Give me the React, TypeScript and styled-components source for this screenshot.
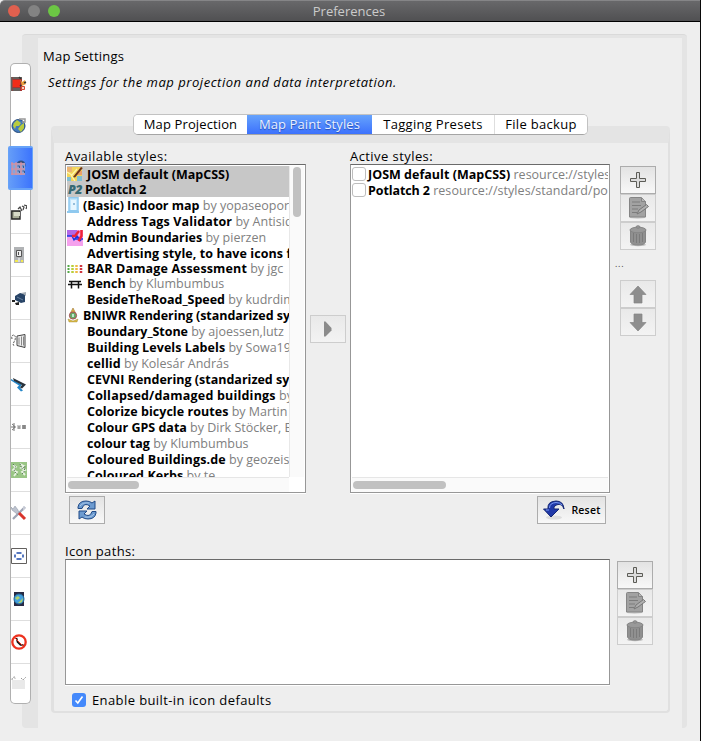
import React from "react";
import styled, { createGlobalStyle } from "styled-components";

const Global = createGlobalStyle`
  *{box-sizing:border-box}
  body{margin:0;background:#eee;font-family:"Open Sans","Noto Sans",sans-serif;font-size:13px;color:#000;overflow:hidden}
`;

/* window frame */
const Window = styled.div`
  width:701px;height:741px;display:flex;flex-direction:column;background:#eee;border-right:1px solid #0a0a0a;
`;
const TitleBar = styled.header`
  flex:none;height:22px;display:flex;align-items:center;padding-left:8px;gap:8px;
  background:linear-gradient(#68686a,#505052);border-top:1px solid #858587;border-bottom:1px solid #000;border-top-left-radius:5px;
`;
const Light = styled.i<{ $c: string }>`width:12px;height:12px;border-radius:50%;background:${p => p.$c};`;
const TitleText = styled.div`flex:1;text-align:center;padding-right:70px;color:#cbcbcb;`;
const Body = styled.div`flex:1;display:flex;align-items:flex-start;padding:12px 0 0 8px;`;

/* category strip */
const Strip = styled.nav`
  flex:none;width:25px;margin-top:29px;padding:0 2px;z-index:1;
`;
const StripTab = styled.div<{ $active?: boolean; $line?: boolean; $h: number }>`
  height:${p => p.$h}px;display:flex;align-items:center;
  margin:0 ${p => (p.$active ? "-2px" : "0")};padding-left:${p => (p.$active ? 2 : 0)}px;
  background:${p => (p.$active ? "linear-gradient(90deg,#659df8,#3c74fd)" : "#fff")};
  border:solid ${p => (p.$active ? "#67a3f8" : "#b0b0b0")};
  border-width:${p => (p.$active ? "2px 1px 2px 1px" : "0 1px")};
  border-radius:${p => (p.$active ? "2px" : "0")};
  box-shadow:${p => (p.$line ? "inset 0 1px #dedede" : "none")};
  &:first-child{border-radius:5px 5px 0 0;border-top-width:1px}
  &:last-child{border-radius:0 0 5px 5px;border-bottom-width:1px;box-shadow:inset 0 1px #dedede}
  svg{flex:none;display:block}
`;
const Frame = styled.main`
  flex:none;width:665px;height:694px;margin-left:-11px;padding:3px 5px 0 16px;
  background:#e4e4e4;border-top:1px solid #dadada;border-radius:4px;
`;
const Page = styled.section`
  height:690px;background:#eee;padding-left:5px;display:flex;flex-direction:column;align-items:flex-start;
`;
const Text = styled.span<{ $ls?: number; $bold?: boolean; $grey?: boolean }>`
  white-space:pre;letter-spacing:${p => p.$ls || 0}px;
  font-weight:${p => (p.$bold ? 700 : 400)};color:${p => (p.$grey ? "#808080" : "inherit")};
`;
const Heading = styled.h1`margin:9px 0 0;font-size:13px;font-weight:400;line-height:19px;`;
const Description = styled.p`margin:7px 0 0 5px;font-style:italic;line-height:19px;`;

/* inner tabs */
const TabRow = styled.div`
  height:21px;margin:22px 0 0 90px;display:flex;z-index:1;border-radius:5px;overflow:hidden;
  border:1px solid #c2c2c2;border-bottom-color:#a5a5a5;background:#fff;width:455px;
`;
const Tab = styled.div<{ $w: number; $active?: boolean; $line?: boolean }>`
  width:${p => p.$w}px;text-align:center;line-height:19px;white-space:nowrap;
  color:${p => (p.$active ? "#e9f1ff" : "#000")};
  background:${p => (p.$active ? "linear-gradient(#68a5fc,#3a6ffd)" : "#fff")};
  text-shadow:${p => (p.$active ? "0 1px 1px #254bb0" : "none")};
  border-left:${p => (p.$line ? "1px solid #dedede" : "0")};
  margin:${p => (p.$active ? "-1px 0" : "0")};padding-top:${p => (p.$active ? 1 : 0)}px;
`;
const TabPage = styled.div`
  width:619px;height:587px;margin:-9px 0 0 8px;border:1px solid #e0e0e0;border-width:1px 2px 2px 3px;border-radius:4px;
  border-top:17px solid #e4e4e4;padding:5px 0 0 11px;
`;
const Row = styled.div<{ $mt?: number }>`display:flex;align-items:flex-start;margin-top:${p => p.$mt || 0}px;`;
const Column = styled.div<{ $w: number; $ml?: number }>`
  flex:none;width:${p => p.$w}px;margin-left:${p => p.$ml || 0}px;display:flex;flex-direction:column;
`;
const Label = styled.div`height:16px;line-height:17px;white-space:nowrap;`;

/* lists */
const ListBox = styled.div<{ $h: number }>`
  height:${p => p.$h}px;background:#fff;border:1px solid #979797;border-top-color:#6a6a6a;box-shadow:0 1px #fff;
  display:grid;grid-template-columns:1fr auto;grid-template-rows:1fr auto;overflow:hidden;padding:1px;font-size:12.5px;
`;
const Items = styled.div`min-width:0;min-height:0;overflow:hidden;height:311px;`;
const Item = styled.div<{ $h: number; $sel?: boolean; $drop?: boolean }>`
  height:${p => p.$h}px;line-height:${p => (p.$drop ? p.$h + 1 : p.$h - 1)}px;display:flex;white-space:pre;overflow:hidden;
  background:${p => (p.$sel ? "#c7c7c7" : "#fff")};
`;
const Glyph = styled.span<{ $w: number }>`
  flex:none;width:${p => p.$w}px;
  svg{display:block;width:100%;height:100%}
`;
const P2 = styled.b`font-weight:800;font-style:italic;color:#376a74;padding-left:1px;letter-spacing:-.5px;`;
const VTrack = styled.div`width:15px;background:#fafafa;border-left:1px solid #e8e8e8;padding:1px 0 0 3px;`;
const VThumb = styled.div`width:8px;height:50px;border-radius:4px;background:#c1c1c1;`;
const HTrack = styled.div`height:15px;background:#fafafa;border-top:1px solid #e6e6e6;padding:3px 0 0 1px;`;
const HThumb = styled.div<{ $w: number }>`width:${p => p.$w}px;height:8px;border-radius:4px;background:#c1c1c1;`;
const Corner = styled.div`background:#fff;`;

/* controls */
const Button = styled.button<{ $off?: boolean; $w?: number; $mt?: number; $ml?: number }>`
  flex:none;width:${p => p.$w || 36}px;height:28px;margin:${p => p.$mt || 0}px 0 0 ${p => p.$ml || 0}px;padding:0;
  display:flex;align-items:center;justify-content:center;gap:5px;
  border:1px solid ${p => (p.$off ? "#cdcdcd" : "#acacac")};
  background:linear-gradient(${p => (p.$off ? "#e9e9e9,#f3f3f3" : "#e3e3e3,#f8f8f8")});
  font:600 10.5px/24px "Open Sans",sans-serif;color:#000;letter-spacing:.2px;
`;
const Dots = styled.div`height:30px;margin-left:-5px;line-height:28px;font-size:9px;letter-spacing:.7px;color:#444;`;
const Check = styled.i<{ $on?: boolean }>`
  flex:none;width:14px;height:14px;border-radius:3px;display:flex;align-items:center;justify-content:center;
  background:${p => (p.$on ? "#4489fb" : "#fff")};border:${p => (p.$on ? "0" : "1px solid #bdbdbd")};
  ${Item} &{margin:1px 2px 0 0}
`;
const CheckRow = styled.label`display:flex;align-items:center;gap:6px;margin:7px 0 0 7px;height:16px;`;

const S = ({ children, w = 16, h = 16 }: { children: React.ReactNode; w?: number; h?: number }) => (
  <svg width={w} height={h} viewBox={`0 0 ${w} ${h}`}>{children}</svg>
);

const Plus = () => <S w={18} h={18}><path d="M7.500 1.500h3v6h6v3h-6v6h-3v-6h-6v-3h6z" fill="#dcdcdc" stroke="#5c5c56" /></S>;
const Edit = () => <S w={22} h={24}><ellipse cx="10.500" cy="21.500" rx="8" ry="1.200" fill="#ccc" /><path d="M2.500 2.500q0-1 1-1h11l4 4v15.500h-16z" fill="#a2a2a2" stroke="#858585" /><path d="M5 6h8M5 9.500h9M5 13h6M5 16.500h5" stroke="#7c7c7c" /><path d="M14.500 2v3.500h4" fill="#b8b8b8" stroke="#858585" /><path d="m10 18 2-4 7.500-5.500 2 2-7.500 5.500z" fill="#b0b0b0" stroke="#777" /></S>;
const Trash = () => <S w={20} h={24}><ellipse cx="10" cy="20.800" rx="8" ry="1.500" fill="#bbb" /><path d="M2.500 6h15v12q-1 3-7.500 3t-7.500-3z" fill="#909090" stroke="#858585" /><path d="M5.500 9v9M8.500 10v9M11.500 10v9M14.500 9v9" stroke="#7b7b7b" /><ellipse cx="10" cy="6" rx="8" ry="2.800" fill="#999" stroke="#858585" /><ellipse cx="10" cy="3" rx="2" ry="1.200" fill="#999" stroke="#858585" /></S>;
const Arrow = ({ down }: { down?: boolean }) => <S w={18} h={20}><path transform={down ? "rotate(180 9 10.500)" : undefined} d="M9 2 17 10.500h-4V19H5v-8.500H1z" fill="#8e8e8e" stroke="#858585" strokeWidth=".7" /></S>;
const Play = () => <S><path d="M4 0.500v15h1.500l6-6V7l-6-6.500z" fill="#8b8b8b" /></S>;
const Refresh = () => <S w={22} h={22}><path d="M2 9.500V8q1-6 8-6 4 0 6 2l3-2v8h-8l3-3q-6-4-8 2.500z" fill="#6d9bd0" stroke="#204a87" /><path d="M20 12.500V14q-1 6-8 6-4 0-6-2l-3 2v-8h8l-3 3q6 4 8-2.500z" fill="#6d9bd0" stroke="#204a87" /><path d="M4 7q3-4 9-3M18 15q-3 4-9 3" stroke="#a9c7e8" fill="none" /></S>;
const Undo = () => <S w={24} h={22}><ellipse cx="12" cy="18.500" rx="8" ry="2" fill="#ddd" /><path d="M6 10q-1-7.500 8-8 7.500 0 8 8-2-5.500-6-4.500-4.500 1-4 4.500h5l-8 8-7.500-8z" fill="#2038a8" stroke="#152773" /><path d="M7.500 9q0-5 6.500-5.500 4 0 6 2.500M4 11h3" stroke="#7d9df4" fill="none" /></S>;

/* category icons */
const stripIcons = [
  <><path d="M0 1h11v14H0z" fill="#a53432" /><path d="M1 4h8v7H1z" fill="#f22d18" /><path d="M0 1h1.500v14H0M2 12h7v3H2zM2 1h9v2H2" fill="#65605c" /><path d="m9 3 2 3 3-2 1 4-4 2z" fill="#e9a13b" /><path d="m8 1 2 2m3 4 2-1m-6 3 2 2" stroke="#353535" strokeWidth="1.500" /><path d="M10.500 10.500h3v3h-3z" fill="#f7d4c5" stroke="#d54b31" /></>,
  <><circle cx="7.500" cy="9" r="6.500" fill="#437abc" stroke="#254b7b" /><path d="M3 6 6 3l4 3-2 3H5L4 12 2 9zm7 2 3-2v5l-3 4-3-3z" fill="#b9cc3e" /><path d="M8 2h6v3h-3" fill="none" stroke="#999" strokeWidth="1.500" /></>,
  <><circle cx="10" cy="5" r="4.500" fill="#34517e" /><path d="M1 3h13v12H1z" fill="#87a4da" /><path d="M1 2v13M5 2v13M10 2v13M0 4h14M0 9h14M0 14h14" stroke="#e28b94" strokeWidth="1.100" /><path d="M6.500 6h2v2m3-2h1v2m-6 3h2v2m3-2h2v2" stroke="#395b91" fill="none" /></>,
  <><path d="M.8 7v8H9V7z" fill="#aaae98" stroke="#222" strokeWidth="1.400" /><path d="M3 8h6v4H3" fill="#d7dac7" /><path d="m7 5 2-2 2 4m0-5 2 1-1 3m1-5 3 1-1 3" stroke="#444" fill="none" strokeWidth="1.200" /></>,
  <><path d="M3 0h10v16H3z" fill="#b1b3b5" /><path d="M5.500 3.500h5v6h-5z" fill="#eee" stroke="#555" /><path d="M7.500 5v3" stroke="#555" /><path d="M4 13h3v2H4m6-2h2v2h-2" fill="#f2e951" /><path d="M8 11v4" stroke="#fff" /></>,
  <><path d="m4 6 5-3 5 1v8l-4 1-6-3z" fill="#284467" /><path d="m10 3 5-1v4l-3-2" fill="#a5adb5" /><path d="M1 10h3v2H1m3 1 4-1v3H5z" fill="#222" /><path d="m6 7 6 3" stroke="#6680a0" /></>,
  <><path d="m6 3 8-1.500v13l-8-2z" fill="#eee" stroke="#444" /><path d="M8 4.500v7m2.500-8v9m2-9v9" fill="none" stroke="#888" /><path d="M1 6Q0 2 3 2q2 1 1 5l-2 4 1 2" fill="none" stroke="#555" strokeDasharray="2 1" /></>,
  <><path d="m0 3 11 5.500-2 3 3 3-2 1-4-4 2-2-8-5z" fill="#2587c8" /><path d="m2 2 13 6.500-4 4-2-1 2-2.500L3 5z" fill="#29323b" /></>,
  <><path d="M1 5q5 3 0 6M3 4v8M5 8H0" stroke="#777" fill="none" /><path d="M6 6h4v4H6z" fill="#ccc" /><path d="M11 6h4v4h-4z" fill="#999" /><path d="M8 7v3m5-4v4" stroke="#777" /></>,
  <><path d="M0 0h16v16H0z" fill="#99c585" /><path d="m2 3 3 2-3 3 4 2-3 4M9 2l4 2-3 2 4 2-3 2 3 3" fill="none" stroke="#e8f3e2" strokeWidth="1.800" /><path d="m2 2 3 3-2 4 4 4m2-11 2 5 3-3-1 6-3 3" fill="none" stroke="#34523a" strokeDasharray="1 1.500" /></>,
  <><path d="m2 14 12-12" stroke="#9da4b4" strokeWidth="2.200" /><path d="m0 2 2 2 2-3 3 4 1 3-2 1-5-4z" fill="#bdc3cf" stroke="#8991a1" strokeWidth=".5" /><path d="m8 8 6 6" stroke="#d9342c" strokeWidth="3" /><path d="m12 1 3 2-3 3" fill="#c7cad5" /></>,
  <><path d="M.500.500h15v15H.500z" fill="#fff" stroke="#62605e" /><path d="M5.500 5h5M5.500 11h5M4 6.500v3M12 6.500v3" fill="none" stroke="#5577bf" strokeWidth="2" /></>,
  <><path d="M3 1h10v14H3z" fill="#282a43" /><circle cx="8" cy="8" r="5" fill="#44a0dd" stroke="#276a99" /><path d="m4 7 3-2 2 2-3 2m1 3 5-5-1 4-2 1z" fill="#b2d46a" /></>,
  <><circle cx="8" cy="8" r="6.700" fill="#fff" stroke="#ed321f" strokeWidth="2.300" /><path d="m5.500 4 1 4 3 3 3 0" stroke="#111" strokeWidth="1.600" fill="none" /><path d="m4 4 8 8" stroke="#ed321f" strokeWidth="1" /></>,
  <><path d="M1 5h13v9H1z" fill="#e9e9e9" /><path d="M1 5q0-3 3-3v2m6-1 2 2 3-3" stroke="#999" fill="none" strokeDasharray="2 1" /></>,
];
const stripHeight = (i: number) => ({ 0: 41, 1: 42, 2: 44, 14: 41 } as Record<number, number>)[i] || 43;

const rowIcons: Record<string, React.ReactNode> = {
  map: <svg viewBox="0 0 20 16"><path d="M0 1h15v14H0z" fill="#f3d55b" /><path d="M0 1h5v5H0" fill="#ecb472" /><path d="M10 5h5v4h-5" fill="#eca169" /><path d="M0 11h4v4H0m10-5h5v5h-5" fill="#82bfd1" /><path d="m0 6 5 3 5-6m-6 6 4 6" stroke="#fff6ae" strokeWidth="1.300" fill="none" /><path d="m6 11 2 .5 7.800-9.500L14 1z" fill="#6b3319" /></svg>,
  door: <svg viewBox="0 0 16 17"><path d="M2 .800h9v13H2z" fill="#c2e6fc" stroke="#8fc9ef" strokeWidth="1.500" /><path d="M4 3h5v10H4z" fill="#e6f6ff" /><path d="M0 15h12" stroke="#8fc9ef" strokeWidth="2" /><path d="M6 7h2" stroke="#4586b7" /></svg>,
  admin: <svg viewBox="0 0 20 16"><path d="M0 0h16v16H0z" fill="#f5a1ed" /><path d="M0 0h10v6H0" fill="#b267e7" /><path d="M0 6h5l2 4 3-4 4 5M8 9h8" stroke="#1737e7" strokeWidth="1.400" fill="none" /><path d="M14.500 0v6l-3 5M12 1l-4 5H5" stroke="#ef2338" strokeWidth="2.500" fill="none" /></svg>,
  bars: <svg viewBox="0 0 20 15"><path d="M1.500 3v9" stroke="#54a946" strokeWidth="2" strokeDasharray="2 1" /><path d="M5.500 3v9" stroke="#b9ce38" strokeWidth="2.500" strokeDasharray="2 1" /><path d="M9.500 3v9" stroke="#efb944" strokeWidth="2.500" strokeDasharray="2 1" /><path d="M14 3v9" stroke="#cf3640" strokeWidth="2.500" strokeDasharray="2 1" /></svg>,
  bench: <svg viewBox="0 0 20 15"><path d="M2 4.500h12M1 7.500h14M4.500 4.500v7M11.500 4.500v7" stroke="#111" strokeWidth="1.500" /></svg>,
  crest: <svg viewBox="0 0 16 16"><path d="m4 4 2-4 2 4v5H4z" fill="#e0b847" stroke="#9b702d" strokeWidth=".6" /><circle cx="6" cy="7.500" r="3.600" fill="#68aa66" stroke="#ac4d52" /><path d="M5 6h2v3H5z" fill="#bfe6d2" /><path d="m1 11 5 2 5-2-1 3H2z" fill="#dcbc45" stroke="#9b802d" strokeWidth=".4" /></svg>,
  p2: <P2>P2</P2>,
};

type Entry = { name: string; by?: string; h?: number; x?: number; icon?: string; ls?: number; sel?: boolean; drop?: boolean };
const available: Entry[] = [
  { name: "JOSM default (MapCSS)", icon: "map", sel: true, ls: 0.02, drop: true },
  { name: "Potlatch 2", icon: "p2", h: 15, x: 18, sel: true, ls: -0.15, drop: true },
  { name: "(Basic) Indoor map", by: " by yopaseopor", icon: "door", h: 17, x: 16, drop: true },
  { name: "Address Tags Validator", by: " by Antisidus", ls: 0.14 },
  { name: "Admin Boundaries", by: " by pierzen", icon: "admin" },
  { name: "Advertising style, to have icons for", ls: 0.08 },
  { name: "BAR Damage Assessment", by: " by jgc", icon: "bars", h: 15, ls: 0.14 },
  { name: "Bench", by: " by Klumbumbus", icon: "bench", h: 15 },
  { name: "BesideTheRoad_Speed", by: " by kudrdima" },
  { name: "BNIWR Rendering (standarized symbols)", icon: "crest", x: 16, ls: -0.03 },
  { name: "Boundary_Stone", by: " by ajoessen,lutz", ls: -0.05 },
  { name: "Building Levels Labels", by: " by Sowa1980", ls: 0.07 },
  { name: "cellid", by: " by Kolesár András", ls: 0.1 },
  { name: "CEVNI Rendering (standarized symbols)" },
  { name: "Collapsed/damaged buildings", by: " by", ls: 0.2 },
  { name: "Colorize bicycle routes", by: " by Martin", ls: 0.05 },
  { name: "Colour GPS data", by: " by Dirk Stöcker, B" },
  { name: "colour tag", by: " by Klumbumbus" },
  { name: "Coloured Buildings.de", by: " by geozeisig", ls: 0.13 },
  { name: "Coloured Kerbs", by: " by te", ls: 0.08 },
];

const EditButtons = () => (
  <>
    <Button $mt={18}><Plus /></Button>
    <Button $off><Edit /></Button>
    <Button $off><Trash /></Button>
  </>
);

export default function App() {
  return (
    <Window>
      <Global />
      <TitleBar>
        <Light $c="#e0604f" /><Light $c="#838383" /><Light $c="#6cc644" />
        <TitleText><Text>Preferences</Text></TitleText>
      </TitleBar>
      <Body>
        <Strip>
          {stripIcons.map((icon, i) => (
            <StripTab key={i} $active={i === 2} $line={i > 3} $h={stripHeight(i)}><S>{icon}</S></StripTab>
          ))}
        </Strip>
        <Frame>
          <Page>
            <Heading><Text $ls={0.23}>Map Settings</Text></Heading>
            <Description><Text $ls={0.53}>Settings for the map projection and data interpretation.</Text></Description>
            <TabRow>
              <Tab $w={113}><Text $ls={0.12}>Map Projection</Text></Tab>
              <Tab $w={125} $active><Text $ls={0.08}>Map Paint Styles</Text></Tab>
              <Tab $w={122}><Text $ls={0.3}>Tagging Presets</Text></Tab>
              <Tab $w={93} $line><Text $ls={0.3}>File backup</Text></Tab>
            </TabRow>
            <TabPage>
              <Row>
                <Column $w={241}>
                  <Label><Text $ls={0.43}>Available styles:</Text></Label>
                  <ListBox $h={329}>
                    <Items>
                      {available.map(({ name, by, h = 16, x = 20, icon, ls, sel, drop }) => (
                        <Item key={name} $h={h} $sel={sel} $drop={drop}>
                          <Glyph $w={x}>{icon && rowIcons[icon]}</Glyph>
                          <Text $bold $ls={ls}>{name}</Text>
                          {by && <Text $grey>{by}</Text>}
                        </Item>
                      ))}
                    </Items>
                    <VTrack><VThumb /></VTrack>
                    <HTrack><HThumb $w={71} /></HTrack>
                    <Corner />
                  </ListBox>
                  <Button $mt={3} $ml={4}><Refresh /></Button>
                </Column>
                <Column $w={36} $ml={4}><Button $off $mt={167}><Play /></Button></Column>
                <Column $w={260} $ml={4}>
                  <Label><Text $ls={0.43}>Active styles:</Text></Label>
                  <ListBox $h={329}>
                    <Items>
                      <Item $h={16} $drop><Check /><Text $bold $ls={0.02}>JOSM default (MapCSS)</Text><Text $grey> resource://styles/standard</Text></Item>
                      <Item $h={16} $drop><Check /><Text $bold $ls={-0.1}>Potlatch 2</Text><Text $grey $ls={0.05}> resource://styles/standard/potlatch</Text></Item>
                    </Items>
                    <Corner />
                    <HTrack><HThumb $w={93} /></HTrack>
                  </ListBox>
                  <Button $mt={3} $ml={187} $w={69}><Undo />Reset</Button>
                </Column>
                <Column $w={36} $ml={10}>
                  <EditButtons />
                  <Dots>...</Dots>
                  <Button $off><Arrow /></Button>
                  <Button $off><Arrow down /></Button>
                </Column>
              </Row>
              <Row $mt={19}>
                <Column $w={545}>
                  <Label><Text $ls={0.35}>Icon paths:</Text></Label>
                  <ListBox $h={126} />
                </Column>
                <Column $w={36} $ml={7}><EditButtons /></Column>
              </Row>
              <CheckRow>
                <Check $on><svg width="10" height="10" viewBox="0 0 10 10"><path d="m1.500 5.500 2.300 2.500L8.500 1.500" fill="none" stroke="#fff" strokeWidth="1.600" /></svg></Check>
                <Text $ls={0.4}>Enable built-in icon defaults</Text>
              </CheckRow>
            </TabPage>
          </Page>
        </Frame>
      </Body>
    </Window>
  );
}
